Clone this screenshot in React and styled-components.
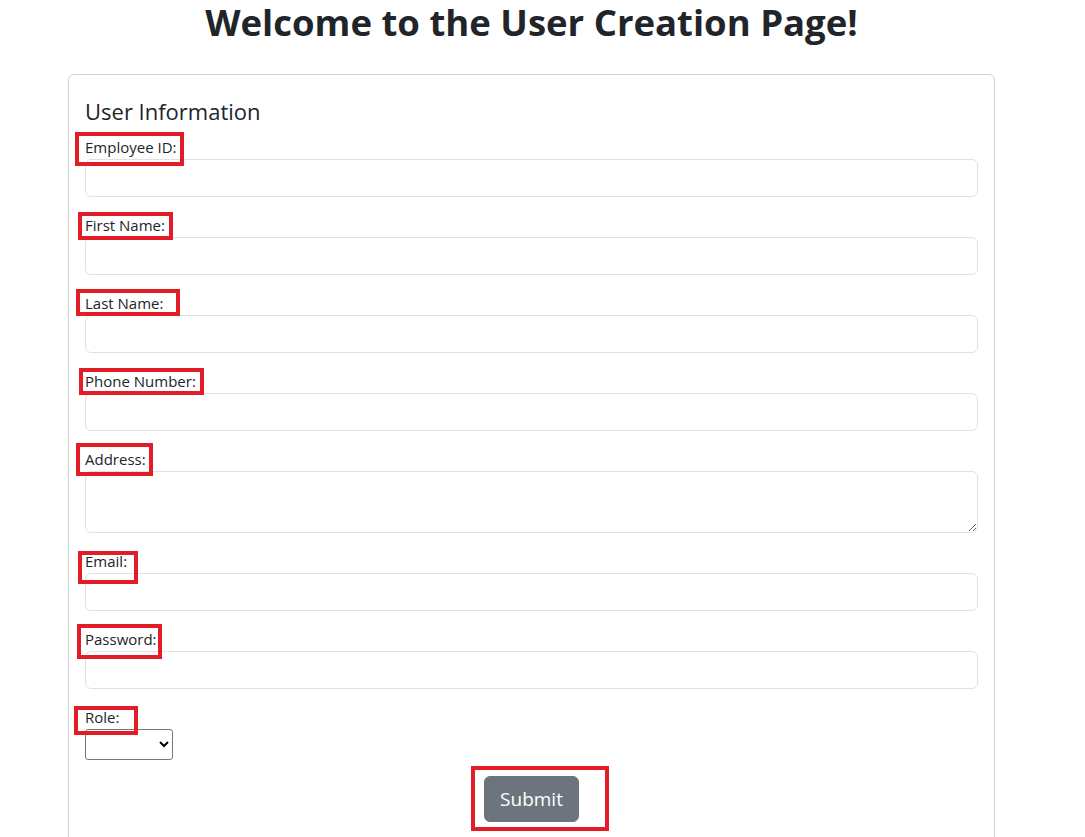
import React from "react";
import styled, { createGlobalStyle } from "styled-components";

const GlobalStyle = createGlobalStyle`
  html, body {
    margin: 0;
    padding: 0;
    background: #fff;
    overflow: hidden;
  }
  body {
    font-family: "Open Sans", "Noto Sans", sans-serif;
    color: #212529;
  }
  * {
    box-sizing: border-box;
  }
`;

const fields = [
  { id: "employeeId", label: "Employee ID:", mark: [-10, -3, 109, 34] },
  { id: "firstName", label: "First Name:", mark: [-7, -1, 95, 28] },
  { id: "lastName", label: "Last Name:", mark: [-9, -2, 104, 27] },
  { id: "phone", label: "Phone Number:", mark: [-6, -1, 125, 27] },
  { id: "address", label: "Address:", mark: [-9, -4, 77, 33], multi: true },
  { id: "email", label: "Email:", mark: [-7, 2, 60, 33] },
  { id: "password", label: "Password:", mark: [-8, -3, 85, 35], type: "password" },
];

export default function App() {
  return (
    <Page>
      <GlobalStyle />
      <Heading>Welcome to the User Creation Page!</Heading>
      <Card>
        <CardTitle>User Information</CardTitle>
        <form onSubmit={(e) => e.preventDefault()}>
          {fields.map((f) => (
            <Group key={f.id}>
              <Label htmlFor={f.id}>
                {f.label}
                <Mark $box={f.mark} />
              </Label>
              {f.multi ? (
                <TextArea id={f.id} rows={2} />
              ) : (
                <Input id={f.id} type={f.type || "text"} />
              )}
            </Group>
          ))}
          <Group>
            <Label htmlFor="role">
              Role:
              <Mark $box={[-11, 1, 64, 29]} />
            </Label>
            <Select id="role" defaultValue="">
              <option value=""></option>
              <option value="admin">Admin</option>
              <option value="user">User</option>
            </Select>
          </Group>
          <Actions>
            <Button type="submit">
              Submit
              <Mark $box={[-14, -11, 138, 65]} />
            </Button>
          </Actions>
        </form>
      </Card>
    </Page>
  );
}

const Page = styled.div`
  width: 927px;
  margin-left: 68px;
`;

const Heading = styled.h1`
  margin: 0;
  font-size: 36.5px;
  line-height: 44px;
  font-weight: 700;
  text-align: center;
  color: #212529;
`;

const Card = styled.div`
  margin-top: 30px;
  border: 1px solid rgba(0, 0, 0, 0.175);
  border-radius: 6px;
  padding: 16px;
  min-height: 800px;
`;

const CardTitle = styled.h4`
  margin: 6px 0 10px;
  font-size: 22px;
  line-height: 28px;
  font-weight: 400;
`;

const Group = styled.div`
  margin-bottom: 16px;
`;

const Label = styled.label`
  position: relative;
  display: inline-block;
  font-size: 15px;
  line-height: 24px;
`;

/* red annotation boxes drawn over the screenshot */
const Mark = styled.span`
  position: absolute;
  left: ${(p) => p.$box[0]}px;
  top: ${(p) => p.$box[1]}px;
  width: ${(p) => p.$box[2]}px;
  height: ${(p) => p.$box[3]}px;
  border: 4px solid #e31d28;
  pointer-events: none;
`;

const Input = styled.input`
  display: block;
  width: 100%;
  height: 38px;
  padding: 6px 12px;
  font: inherit;
  font-size: 16px;
  border: 1px solid #dee2e6;
  border-radius: 6px;
  background: #fff;
`;

const TextArea = styled.textarea`
  display: block;
  width: 100%;
  height: 62px;
  padding: 6px 12px;
  font: inherit;
  font-size: 16px;
  line-height: 24px;
  border: 1px solid #dee2e6;
  border-radius: 6px;
  resize: vertical;
`;

const Select = styled.select`
  display: block;
  width: 88px;
  height: 31px;
  border: 1px solid #767676;
  border-radius: 3px;
  background: #fff;
  font-size: 14px;
`;

const Actions = styled.div`
  display: flex;
  justify-content: center;
  margin-top: 1px;
`;

const Button = styled.button`
  position: relative;
  height: 46px;
  padding: 0 15px;
  font-family: inherit;
  font-size: 19px;
  color: #fff;
  background: #6c757d;
  border: 1px solid #6c757d;
  border-radius: 6px;
  cursor: pointer;
`;
